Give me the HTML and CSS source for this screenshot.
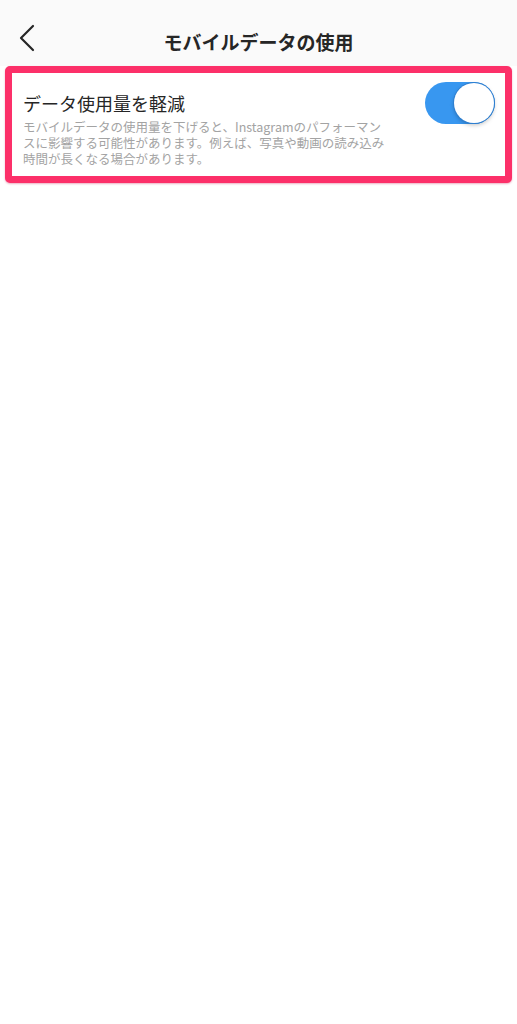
FILE: index.html
```html
<!DOCTYPE html>
<html lang="ja">
<head>
<meta charset="utf-8">
<title>モバイルデータの使用</title>
<link rel="stylesheet" href="styles.css">
</head>
<body>
<header class="header">
  <svg class="back" width="40" height="40" viewBox="0 0 40 40" aria-hidden="true">
    <path d="M33 8 L21 20 L33 32" fill="none" stroke="#262626" stroke-width="2.2" stroke-linecap="round" stroke-linejoin="round"/>
  </svg>
  <h1 class="title">モバイルデータの使用</h1>
  <span></span>
</header>
<main class="content">
  <section class="setting">
    <div class="text">
      <div class="label">データ使用量を軽減</div>
      <p class="desc">モバイルデータの使用量を下げると、Instagramのパフォーマン<br>スに影響する可能性があります。例えば、写真や動画の読み込み<br>時間が長くなる場合があります。</p>
    </div>
    <div class="toggle"><div class="knob"></div></div>
  </section>
</main>
</body>
</html>
```
FILE: styles.css
```css
html, body {
  margin: 0;
  padding: 0;
  background: #ffffff;
}
body {
  width: 517px;
  min-height: 1024px;
  font-family: "Noto Sans CJK JP", "Noto Sans", sans-serif;
  color: #262626;
}
.header {
  height: 66px;
  background: #fafafa;
  display: grid;
  grid-template-columns: 1fr auto 1fr;
  align-items: start;
}
.back {
  display: block;
  margin-top: 18px;
}
.title {
  margin: 28px 0 0;
  font-size: 19px;
  line-height: 28px;
  font-weight: 700;
  color: #262626;
  letter-spacing: 0;
}
.content {
  padding: 0 5px;
}
.setting {
  border: 7px solid #fc3069;
  border-radius: 5px;
  background: #ffffff;
  box-shadow: 0 1px 2px rgba(200, 30, 80, 0.35);
  display: flex;
  justify-content: space-between;
  align-items: flex-start;
  padding: 9px 10px 9px 11px;
}
.text {
  padding-top: 9px;
}
.label {
  font-size: 18px;
  line-height: 24px;
  color: #262626;
}
.desc {
  margin: 4px 0 0;
  font-size: 12.5px;
  line-height: 16px;
  color: #a3a3a3;
  white-space: nowrap;
}
.toggle {
  flex-shrink: 0;
  width: 70px;
  height: 42px;
  border-radius: 21px;
  background: #3897f0;
  display: flex;
  justify-content: flex-end;
  align-items: center;
  padding: 0 1px;
  box-sizing: border-box;
}
.knob {
  width: 40px;
  height: 40px;
  border-radius: 50%;
  background: #ffffff;
  box-shadow: 0 0 0 1px #2f7fd0, 0 2px 4px rgba(0, 0, 0, 0.25);
}
```
